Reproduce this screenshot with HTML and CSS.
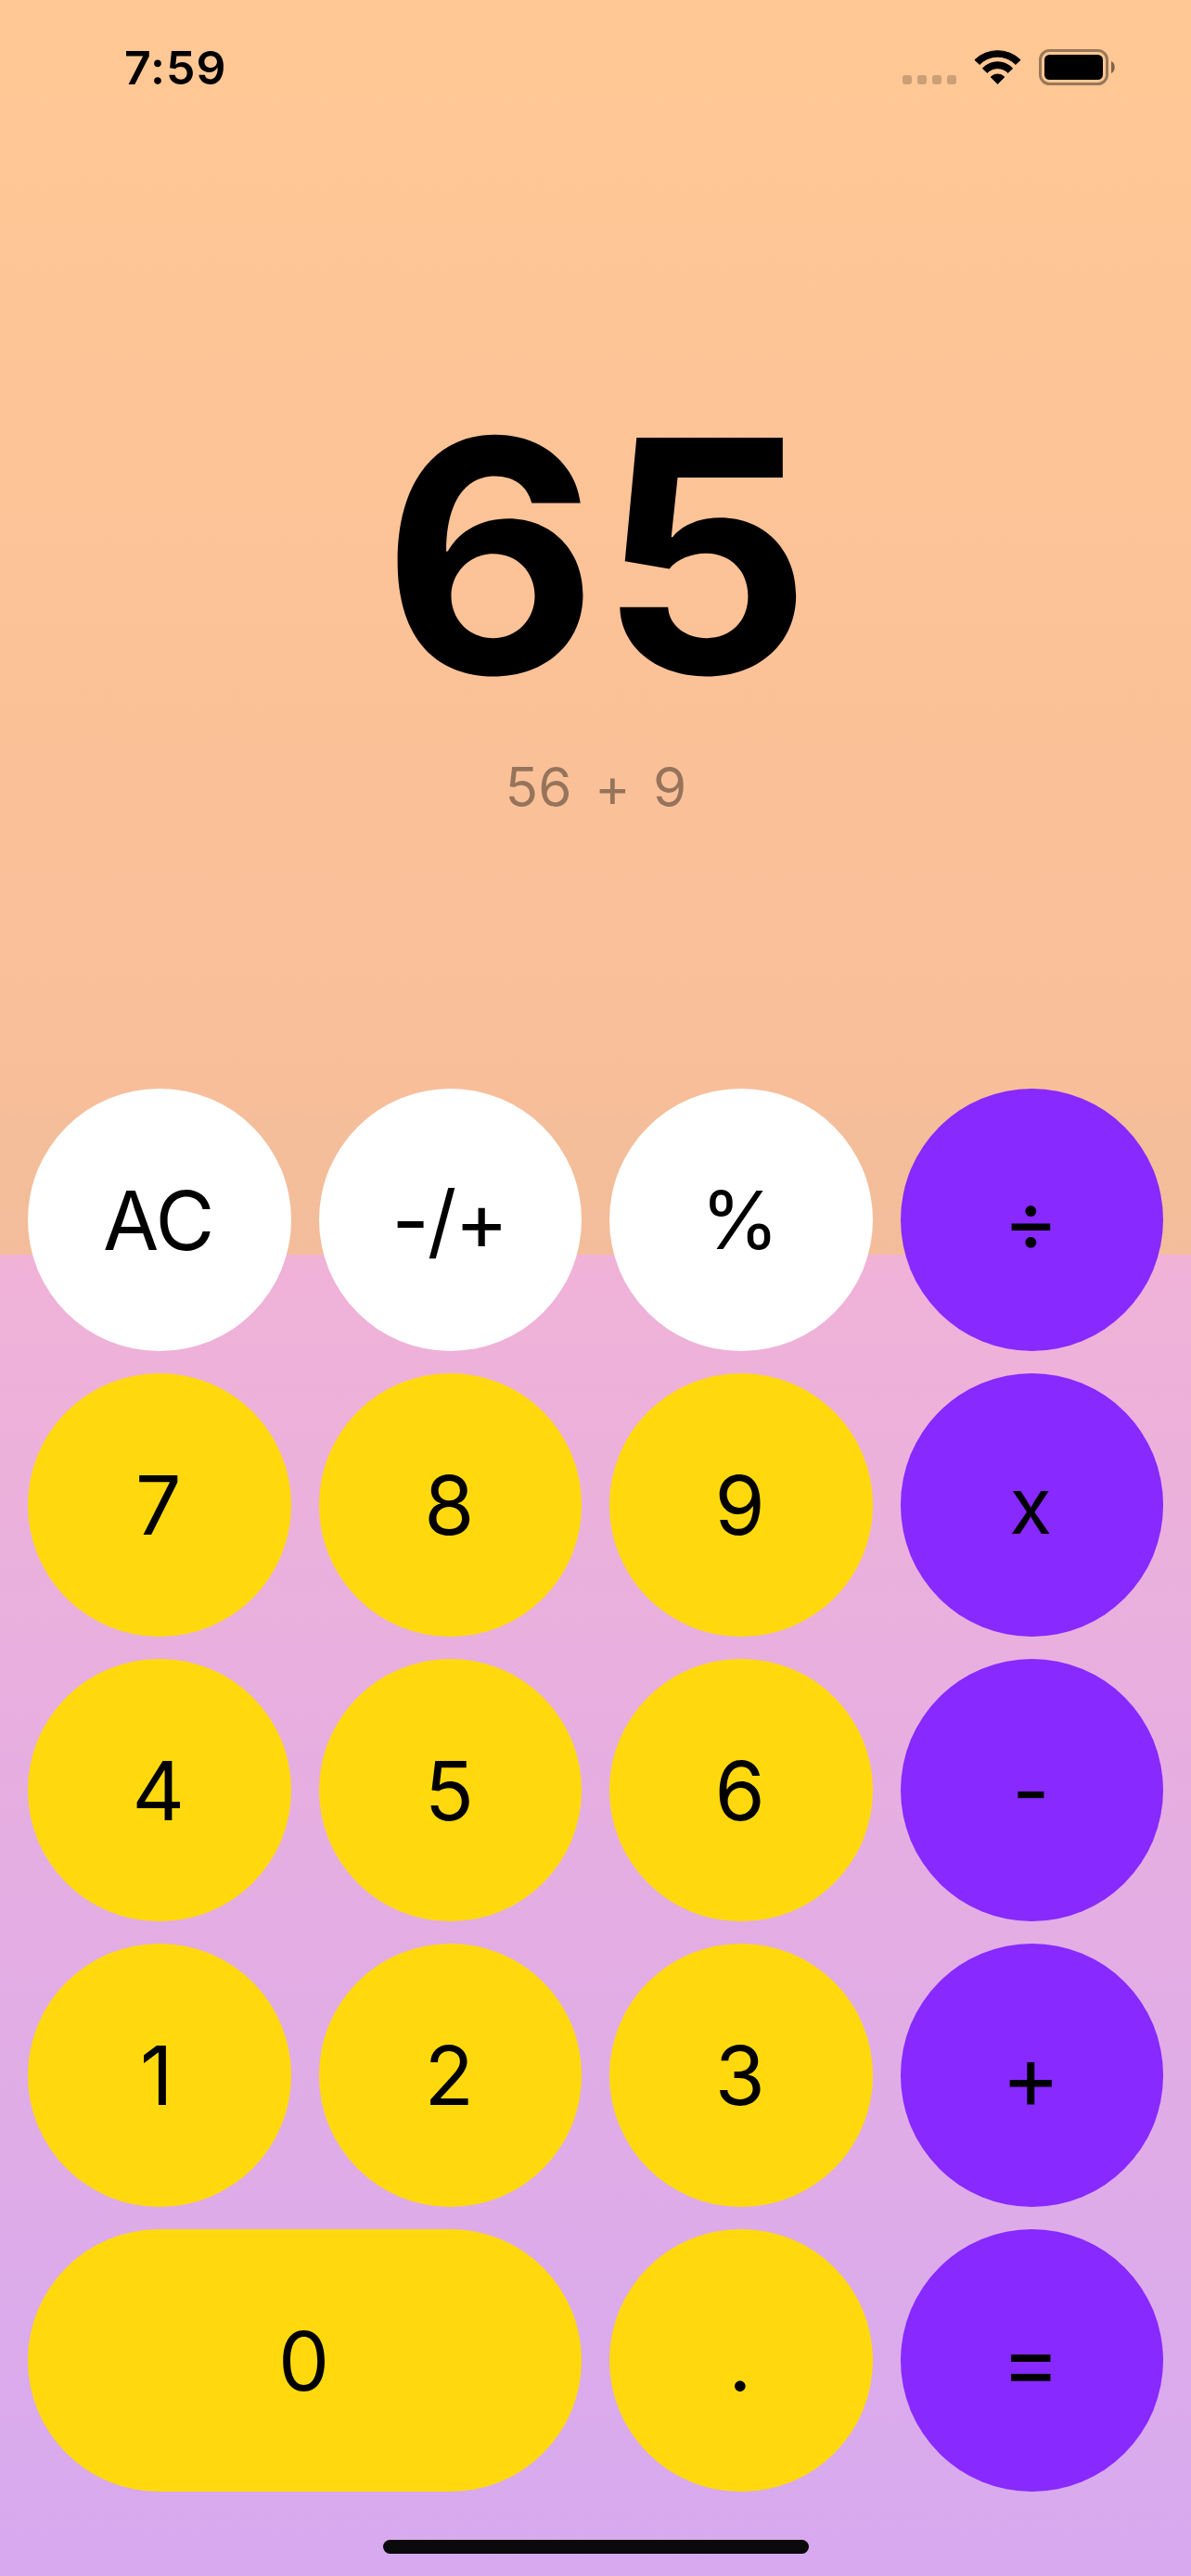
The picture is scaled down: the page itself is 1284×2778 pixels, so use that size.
FILE: index.html
```html
<!DOCTYPE html>
<html lang="en">
<head>
<meta charset="utf-8">
<title>Calculator</title>
<link rel="stylesheet" href="styles.css">
</head>
<body>
<div class="screen">
  <header class="status">
    <span class="time">7:59</span>
    <div class="indicators">
      <svg class="signal" width="58" height="10" viewBox="0 0 58 10" fill="#000" fill-opacity=".2">
        <rect width="10" height="10" rx="3"/>
        <rect x="16" width="10" height="10" rx="3"/>
        <rect x="32" width="10" height="10" rx="3"/>
        <rect x="48" width="10" height="10" rx="3"/>
      </svg>
      <svg class="wifi" width="51" height="37" viewBox="0 0 51 37">
        <path d="M.9 10.6A35.5 35.5 0 0 1 50.1 10.6L44.9 15.4A27 27 0 0 0 6.1 15.4Z"/>
        <path d="M9.4 19.8A22 22 0 0 1 41.6 19.8L36.7 24.4A15.7 15.7 0 0 0 14.3 24.4Z"/>
        <path d="M18.2 29A10.4 10.4 0 0 1 32.8 29L25.5 36.4Z"/>
      </svg>
      <svg class="battery" width="82" height="39" viewBox="0 0 82 39">
        <rect x="1.5" y="1.5" width="72" height="36" rx="10" fill="none" stroke="#000" stroke-opacity=".4" stroke-width="3"/>
        <rect x="6" y="6" width="63" height="27" rx="5.5"/>
        <path d="M78 13C83 15 83 24 78 26Z" fill-opacity=".5"/>
      </svg>
    </div>
  </header>

  <section class="display">
    <div class="result">65</div>
    <div class="expression">56 + 9</div>
  </section>

  <main class="keypad">
    <button class="key fn ac">AC</button>
    <button class="key fn sign">-/+</button>
    <button class="key fn percent">%</button>
    <button class="key op divide">÷</button>
    <button class="key">7</button>
    <button class="key">8</button>
    <button class="key">9</button>
    <button class="key op times">x</button>
    <button class="key">4</button>
    <button class="key">5</button>
    <button class="key">6</button>
    <button class="key op">-</button>
    <button class="key one">1</button>
    <button class="key">2</button>
    <button class="key">3</button>
    <button class="key op wide-op">+</button>
    <button class="key zero">0</button>
    <button class="key">.</button>
    <button class="key op wide-op">=</button>
  </main>

  <footer class="home"><div class="home-bar"></div></footer>
</div>
</body>
</html>
```

FILE: styles.css
```css
* {
  box-sizing: border-box;
}

body {
  margin: 0;
  font-family: Inter, "Liberation Sans", sans-serif;
  color: #000;
}

.screen {
  display: flex;
  flex-direction: column;
  width: 1284px;
  height: 2778px;
  overflow: hidden;
  background:
    linear-gradient(#ffc894 0, #f8be9a 1185px, #f4be9a 1215px, #f3bd9b 1353px) top / 100% 1353px no-repeat,
    linear-gradient(#f0b2d7, #d7a9ef) bottom / 100% 1425px no-repeat;
}

.status {
  display: flex;
  justify-content: space-between;
  align-items: center;
  height: 145px;
  padding: 0 82px 0 134px;
}

.time {
  font-size: 50px;
  font-weight: 600;
  line-height: 60px;
  letter-spacing: 1px;
}

.indicators {
  display: flex;
  align-items: center;
}

.signal {
  margin: 27px 19px 0 0;
}

.wifi {
  margin-right: 19px;
  stroke: #000;
  stroke-width: 1;
  stroke-linejoin: round;
}

.display {
  flex: 1;
  display: flex;
  flex-direction: column;
  align-items: center;
  gap: 45px;
  padding-top: 279px;
}

.result {
  padding-left: 4px;
  font-size: 349px;
  font-weight: 700;
  line-height: 350px;
  letter-spacing: 1px;
  transform: scaleX(1.026);
}

.expression {
  padding-left: 1px;
  font-size: 58.5px;
  line-height: 60px;
  letter-spacing: .2px;
  word-spacing: 7.5px;
  color: rgba(0, 0, 0, .4);
}

.keypad {
  display: grid;
  grid-template-columns: repeat(4, 1fr);
  grid-auto-rows: 283.5px;
  gap: 24px 30px;
  padding: 0 30px;
}

.key {
  display: flex;
  align-items: center;
  justify-content: center;
  padding: 2px 2px 0 0;
  border: 0;
  border-radius: 142px;
  background: #ffd90d;
  color: #000;
  font: 400 87.5px/1 Inter, "Liberation Sans", sans-serif;
}

.fn {
  background: #fff;
}

.op {
  background: #8729ff;
}

.ac {
  letter-spacing: -1px;
}

.sign {
  letter-spacing: -2px;
}

.percent {
  font-size: 86px;
}

.divide {
  font-size: 91px;
}

.wide-op {
  font-size: 96px;
}

.times {
  font-size: 84px;
}

.one {
  padding-right: 6px;
}

.zero {
  grid-column: span 2;
}

.home {
  display: flex;
  justify-content: center;
  align-items: flex-start;
  height: 91px;
  padding-top: 52px;
}

.home-bar {
  width: 459px;
  height: 15px;
  border-radius: 8px;
  background: #0a0a0c;
}
```
